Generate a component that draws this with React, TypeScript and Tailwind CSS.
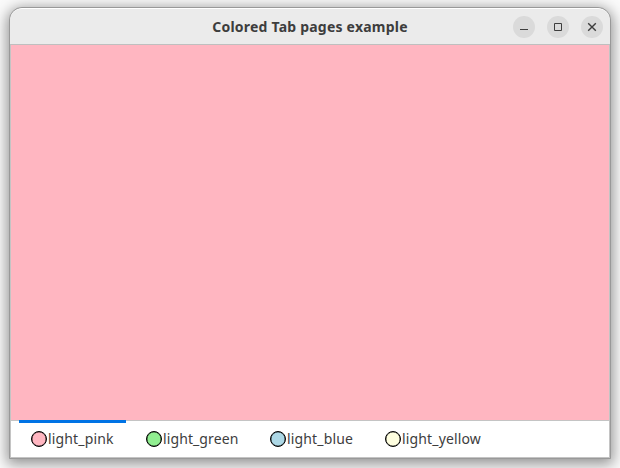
const tabs = [
  { name: 'light_pink', fill: 'bg-[#ffb6c1]', box: 'w-[107px]', track: 'tracking-[0.15px]' },
  { name: 'light_green', fill: 'bg-[#90ee90]', box: 'w-[116px] ml-2', track: 'tracking-[0.1px]' },
  { name: 'light_blue', fill: 'bg-[#add8e6]', box: 'w-[107px] ml-2', track: 'tracking-[0.15px]' },
  { name: 'light_yellow', fill: 'bg-[#ffffe0]', box: 'w-[121px] ml-2', track: 'tracking-[0.15px]' },
];

function WindowButton({ label, d, weight = 1 }: { label: string; d: string; weight?: number }) {
  return (
    <button aria-label={label} className="flex size-[22px] items-center justify-center rounded-full bg-[#dadada]">
      <svg width="22" height="22" viewBox="0 0 22 22" fill="none" stroke="#3d3d3d" strokeWidth={weight}>
        <path d={d} />
      </svg>
    </button>
  );
}

export default function App() {
  return (
    <div className="h-[468px] w-[620px] overflow-hidden bg-[#fafafa] pt-[7px] pl-[9px] font-['Noto_Sans','Open_Sans',sans-serif] text-[#3d3d3d]">
      <div className="flex h-[452px] w-[602px] flex-col overflow-hidden rounded-t-[13px] border border-[#999] bg-[#c4c4c4] shadow-[0_3px_14px_2px_rgba(0,0,0,0.42)]">
        <header className="grid h-[37px] shrink-0 grid-cols-[1fr_auto_1fr] items-center rounded-t-xl border-t border-b border-t-white border-b-[#bfbfbf] bg-[#ebebeb]">
          <span />
          <h1 className="w-[196px] text-center text-[14px] leading-5 font-bold tracking-[0.22px] whitespace-nowrap">Colored Tab pages example</h1>
          <div className="flex justify-end gap-3 pr-[7px]">
            <WindowButton label="Minimize" d="M7 13.5h8" />
            <WindowButton label="Maximize" d="M7.5 7.5h7v7h-7z" />
            <WindowButton label="Close" d="M7.2 7.2l7.6 7.6M14.8 7.2l-7.6 7.6" weight={1.4} />
          </div>
        </header>
        <main className="mx-px flex-1 bg-[#ffb6c1]" />
        <nav className="mx-px mb-px flex h-[37px] shrink-0 bg-white pl-2 shadow-[inset_0_1px_#c4c4c4]">
          {tabs.map((tab, i) => (
            <div key={tab.name} className={`flex h-[37px] shrink-0 items-center pt-px pl-3 ${tab.box} ${i === 0 ? 'shadow-[inset_0_3px_#0073e5]' : ''}`}>
              <span className={`size-4 shrink-0 rounded-full border-[1.5px] border-black ${tab.fill} shadow-[inset_0_0_0_0.3px_black]`} />
              <span className={`ml-px text-[14px] leading-5 whitespace-nowrap ${tab.track}`}>{tab.name}</span>
            </div>
          ))}
        </nav>
      </div>
    </div>
  );
}
